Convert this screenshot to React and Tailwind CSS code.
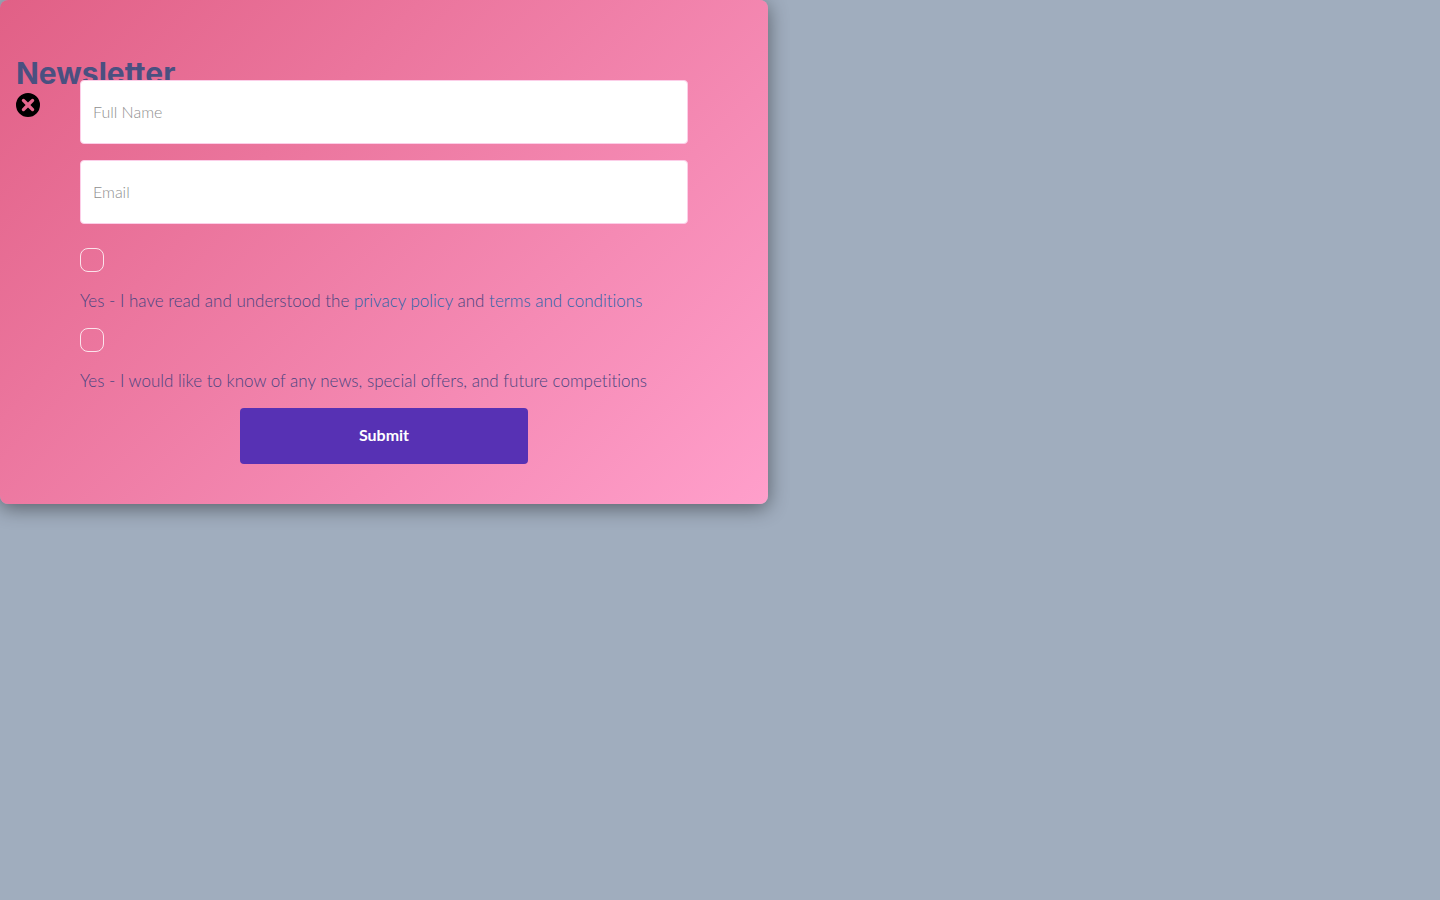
const FIELD =
  "h-16 w-full rounded border border-pink-200 bg-white px-3 pb-0.5 font-light text-base text-gray-600 placeholder:text-[#8f8f8f] outline-none focus:ring-2 focus:ring-[#5731b4]";

function Consent({ id, children }) {
  return (
    <div className="flex h-20 flex-col items-start pt-2">
      <input
        id={id}
        type="checkbox"
        className="h-6 w-6 appearance-none rounded-lg border border-white/80 checked:bg-[#5731b4]"
      />
      <label htmlFor={id} className="mt-4 text-[17px] leading-[26px] font-light text-[#4a4480]">
        {children}
      </label>
    </div>
  );
}

function CloseIcon() {
  return (
    <svg viewBox="0 0 24 24" className="block h-6 w-6" aria-hidden="true">
      <path
        fillRule="evenodd"
        fill="#000"
        d="M12 0a12 12 0 1 0 0 24a12 12 0 1 0 0-24zM17.8 15.4a1.7 1.7 0 0 1-2.4 2.4L12 14.4l-3.4 3.4a1.7 1.7 0 0 1-2.4-2.4L9.6 12 6.2 8.6a1.7 1.7 0 0 1 2.4-2.4L12 9.6l3.4-3.4a1.7 1.7 0 0 1 2.4 2.4L14.4 12z"
      />
    </svg>
  );
}

export default function App() {
  return (
    <main className="min-h-screen bg-[#a0adbe] font-['Lato',sans-serif] [font-variant-ligatures:none]">
      <section className="grid w-full max-w-3xl rounded-lg bg-[linear-gradient(135deg,#e16086,#ff9fcb)] shadow-[0_4px_20px_rgba(0,0,0,0.45)]">
        <header className="col-start-1 row-start-1 flex flex-col items-start px-4 pt-[55px]">
          <h1 className="mb-0.5 font-['Inter',sans-serif] text-[30px] leading-9 font-bold text-[#4a5080]">
            Newsletter
          </h1>
          <button type="button" aria-label="Close">
            <CloseIcon />
          </button>
        </header>
        <form
          className="z-10 col-start-1 row-start-1 mx-20 mt-20 mb-10 flex flex-col"
          onSubmit={(e) => e.preventDefault()}
        >
          <div className="flex flex-col gap-4 pb-4">
            <input type="text" aria-label="Full Name" placeholder="Full Name" className={FIELD} />
            <input type="email" aria-label="Email" placeholder="Email" className={FIELD} />
          </div>
          <Consent id="terms">
            Yes - I have read and understood the{" "}
            <a href="#privacy" className="text-[#2b63a8]">privacy policy</a> and{" "}
            <a href="#conditions" className="text-[#2b63a8]">terms and conditions</a>
          </Consent>
          <Consent id="news">
            Yes - I would like to know of any news, special offers, and future competitions
          </Consent>
          <button
            type="submit"
            className="mt-2 h-14 w-72 self-center rounded bg-[#5731b4] pb-0.5 text-base font-bold text-white"
          >
            Submit
          </button>
        </form>
      </section>
    </main>
  );
}
